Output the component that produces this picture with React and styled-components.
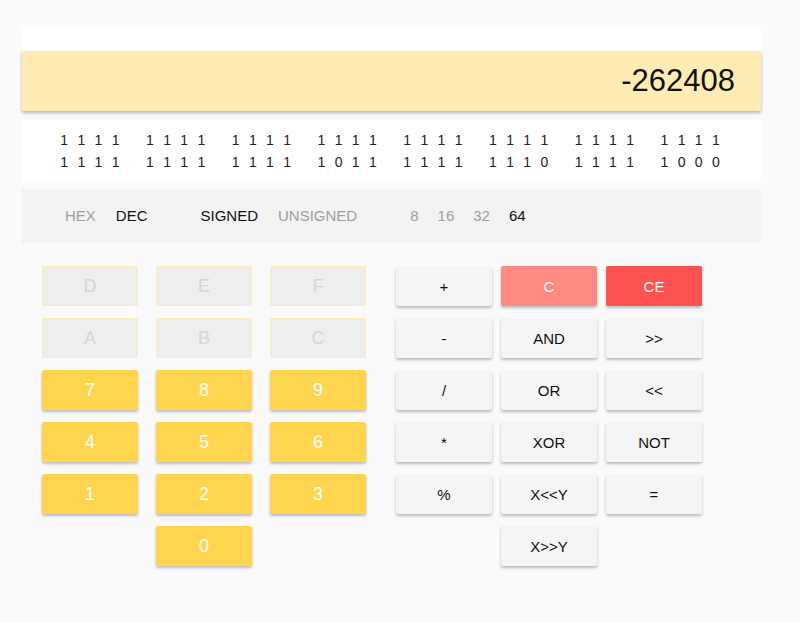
import React from "react";
import styled, { createGlobalStyle } from "styled-components";

const Global = createGlobalStyle`
  html, body { margin: 0; padding: 0; background: #fafafa; }
  body { font-family: "Liberation Sans", Arial, Helvetica, sans-serif; color: #222; }
`;

const Page = styled.div`
  width: 800px;
  height: 622px;
  padding: 28px 0 0 22px;
  box-sizing: border-box;
`;

const Calc = styled.div`
  width: 739px;
  display: flex;
  flex-direction: column;
`;

const TopStrip = styled.div`
  height: 23px;
  background: #fff;
`;

const Display = styled.div`
  height: 60px;
  background: #ffecb3;
  box-shadow: 0 2px 3px rgba(0, 0, 0, 0.28);
  display: flex;
  align-items: center;
  justify-content: flex-end;
  padding-right: 26px;
  font-size: 31px;
  color: #111;
  position: relative;
  z-index: 1;
`;

const Bits = styled.div`
  margin-top: 9px;
  height: 61px;
  background: #fff;
  display: flex;
  flex-direction: column;
  justify-content: center;
  align-items: center;
  gap: 4px;
  padding-right: 3px;
  font-size: 14px;
  color: #222;
`;

const BitRow = styled.div`
  display: flex;
  gap: 17px;
  line-height: 18px;
`;

const Nibble = styled.div`
  display: flex;
`;

const Bit = styled.span`
  width: 17.2px;
  text-align: center;
`;

const Options = styled.div`
  margin-top: 8px;
  height: 54px;
  background: #f3f3f3;
  display: flex;
  align-items: center;
  padding-left: 43px;
  padding-bottom: 1px;
  box-sizing: border-box;
  gap: 53px;
  font-size: 15px;
`;

const OptGroup = styled.div`
  display: flex;
  gap: ${(p) => p.$gap || 20}px;
`;

const Opt = styled.span`
  color: ${(p) => (p.$active ? "#111" : "#9e9e9e")};
`;

const Keypad = styled.div`
  margin-top: 23px;
  padding-left: 20px;
  display: flex;
  gap: 30px;
`;

const NumGrid = styled.div`
  display: grid;
  grid-template-columns: repeat(3, 96px);
  grid-auto-rows: 40px;
  column-gap: 18px;
  row-gap: 12px;
`;

const OpGrid = styled.div`
  display: grid;
  grid-template-columns: repeat(3, 96px);
  grid-auto-rows: 40px;
  column-gap: 9px;
  row-gap: 12px;
`;

const Key = styled.div`
  box-sizing: border-box;
  border-radius: 2px;
  display: flex;
  align-items: center;
  justify-content: center;
  font-size: 18px;
  color: #fff;
  background: #ffd54f;
  box-shadow: 0 2px 3px rgba(0, 0, 0, 0.25);
  grid-column: ${(p) => p.$col || "auto"};
`;

const HexKey = styled(Key)`
  background: #eeeeee;
  border: 1px solid #ffecb3;
  color: #d6d6d6;
  box-shadow: none;
`;

const OpKey = styled(Key)`
  font-size: 15px;
  color: #111;
  background: ${(p) => p.$bg || "#f5f5f5"};
  ${(p) => p.$bg && "color: #fff;"}
`;

const line1 = ["1111", "1111", "1111", "1111", "1111", "1111", "1111", "1111"];
const line2 = ["1111", "1111", "1111", "1011", "1111", "1110", "1111", "1000"];

const BitLine = ({ groups }) => (
  <BitRow>
    {groups.map((g, i) => (
      <Nibble key={i}>
        {g.split("").map((b, j) => (
          <Bit key={j}>{b}</Bit>
        ))}
      </Nibble>
    ))}
  </BitRow>
);

export default function App() {
  return (
    <>
      <Global />
      <Page>
        <Calc>
          <TopStrip />
          <Display>-262408</Display>
          <Bits>
            <BitLine groups={line1} />
            <BitLine groups={line2} />
          </Bits>
          <Options>
            <OptGroup>
              <Opt>HEX</Opt>
              <Opt $active>DEC</Opt>
            </OptGroup>
            <OptGroup>
              <Opt $active>SIGNED</Opt>
              <Opt>UNSIGNED</Opt>
            </OptGroup>
            <OptGroup $gap={19}>
              <Opt>8</Opt>
              <Opt>16</Opt>
              <Opt>32</Opt>
              <Opt $active>64</Opt>
            </OptGroup>
          </Options>
          <Keypad>
            <NumGrid>
              {["D", "E", "F", "A", "B", "C"].map((k) => (
                <HexKey key={k}>{k}</HexKey>
              ))}
              {["7", "8", "9", "4", "5", "6", "1", "2", "3"].map((k) => (
                <Key key={k}>{k}</Key>
              ))}
              <Key $col="2">0</Key>
            </NumGrid>
            <OpGrid>
              <OpKey>+</OpKey>
              <OpKey $bg="#ff8a80">C</OpKey>
              <OpKey $bg="#ff5252">CE</OpKey>
              <OpKey>-</OpKey>
              <OpKey>AND</OpKey>
              <OpKey>&gt;&gt;</OpKey>
              <OpKey>/</OpKey>
              <OpKey>OR</OpKey>
              <OpKey>&lt;&lt;</OpKey>
              <OpKey>*</OpKey>
              <OpKey>XOR</OpKey>
              <OpKey>NOT</OpKey>
              <OpKey>%</OpKey>
              <OpKey>X&lt;&lt;Y</OpKey>
              <OpKey>=</OpKey>
              <OpKey $col="2">X&gt;&gt;Y</OpKey>
            </OpGrid>
          </Keypad>
        </Calc>
      </Page>
    </>
  );
}
